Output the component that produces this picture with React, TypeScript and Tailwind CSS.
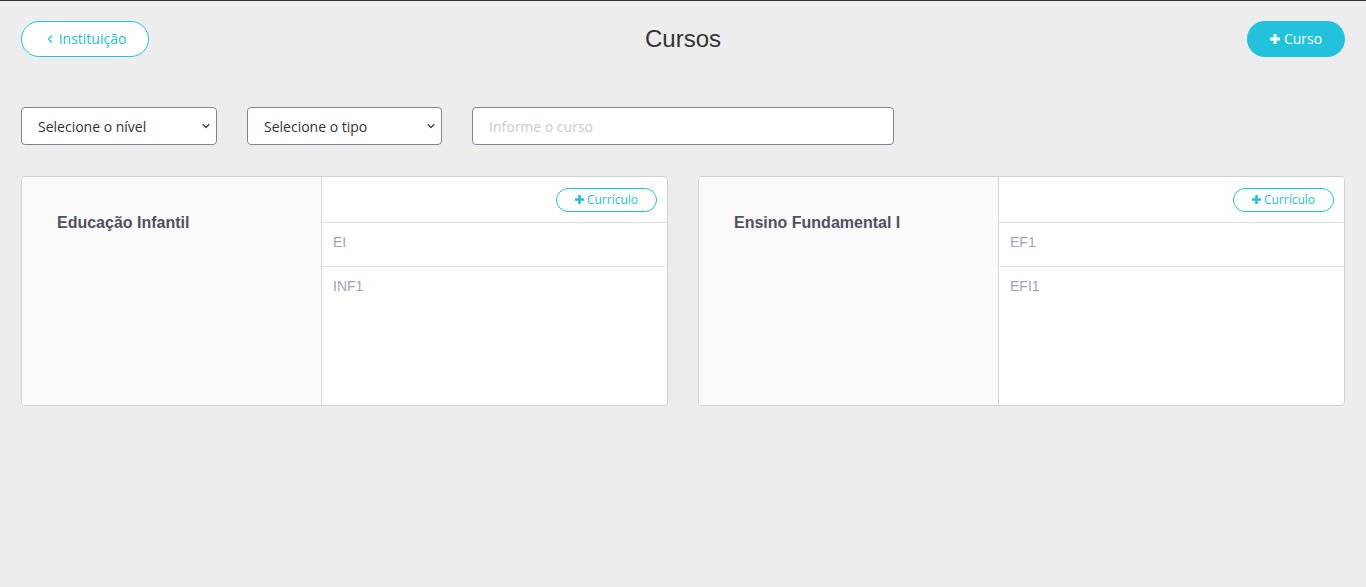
import { ChevronDown, ChevronLeft } from "lucide-react";

const Plus = ({ size = 10 }: { size?: number }) => (
  <svg width={size} height={size} viewBox="0 0 10 10" className="shrink-0">
    <rect x="3.5" y="0" width="3" height="10" rx="0.6" fill="currentColor" />
    <rect x="0" y="3.5" width="10" height="3" rx="0.6" fill="currentColor" />
  </svg>
);

const courses = [
  { title: "Educação Infantil", items: ["EI", "INF1"] },
  { title: "Ensino Fundamental I", items: ["EF1", "EFI1"] },
];

const Select = ({ label, width }: { label: string; width: string }) => (
  <div className={`relative h-[38px] ${width}`}>
    <select className="appearance-none w-full h-full bg-white border border-[#7b8896] rounded-[4px] pl-[16px] pr-8 text-[14px] text-[#333] font-['Open_Sans',sans-serif] outline-none">
      <option>{label}</option>
    </select>
    <ChevronDown
      size={12}
      strokeWidth={2.5}
      className="absolute right-[5px] top-[13px] text-[#444] pointer-events-none"
    />
  </div>
);

export default function App() {
  return (
    <div className="min-h-[587px] bg-[#ededed] border-t border-[#333] font-['Open_Sans',sans-serif]">
      <div className="px-[21px] pt-[20px]">
        {/* header */}
        <div className="grid grid-cols-3 items-center h-[36px]">
          <button className="justify-self-start flex items-center justify-center gap-[3px] w-[128px] h-[36px] rounded-full border border-[#22c1dc] bg-white text-[#22c1dc] text-[14px] leading-[18px] pb-px">
            <ChevronLeft size={12} strokeWidth={2.5} />
            <span>Instituição</span>
          </button>
          <h1 className="justify-self-center text-[24px] text-[#333] font-['Liberation_Sans',Arial,sans-serif]">
            Cursos
          </h1>
          <button className="justify-self-end flex items-center justify-center gap-[4px] w-[98px] h-[36px] rounded-full bg-[#22c1dc] text-white text-[14px] leading-[18px] pb-px">
            <Plus size={10} />
            <span>Curso</span>
          </button>
        </div>

        {/* filters */}
        <div className="flex items-center gap-[30px] mt-[50px]">
          <Select label="Selecione o nível" width="w-[196px]" />
          <Select label="Selecione o tipo" width="w-[195px]" />
          <input
            placeholder="Informe o curso"
            className="w-[422px] h-[38px] bg-white border border-[#7b8896] rounded-[4px] px-[16px] text-[14px] text-[#333] placeholder:text-[#c5ccd4] outline-none"
          />
        </div>

        {/* cards */}
        <div className="grid grid-cols-2 gap-[30px] mt-[31px]">
          {courses.map((c) => (
            <div
              key={c.title}
              className="flex h-[230px] rounded-[4px] border border-[#d2d2d2] bg-white overflow-hidden"
            >
              <div className="w-[300px] shrink-0 bg-[#fafafa] border-r border-[#d9d9d9] pl-[35px] pt-[36px]">
                <h2 className="text-[16px] leading-[20px] font-bold text-[#505064] font-['Liberation_Sans',Arial,sans-serif]">
                  {c.title}
                </h2>
              </div>
              <div className="flex-1 flex flex-col">
                <div className="h-[46px] shrink-0 flex items-center justify-end pr-[10px] border-b border-[#e3e3e3]">
                  <button className="flex items-center justify-center gap-[3px] w-[101px] h-[24px] rounded-full border border-[#22c1dc] bg-white text-[#22c1dc] text-[12px]">
                    <Plus size={9} />
                    <span>Currículo</span>
                  </button>
                </div>
                {c.items.map((it, i) => (
                  <div
                    key={it}
                    className={`px-[11px] pt-[11px] text-[14px] leading-[16px] text-[#a0a4bc] font-['Liberation_Sans',Arial,sans-serif] ${
                      i < c.items.length - 1 ? "h-[44px] border-b border-[#e3e3e3]" : "flex-1"
                    }`}
                  >
                    {it}
                  </div>
                ))}
              </div>
            </div>
          ))}
        </div>
      </div>
    </div>
  );
}
